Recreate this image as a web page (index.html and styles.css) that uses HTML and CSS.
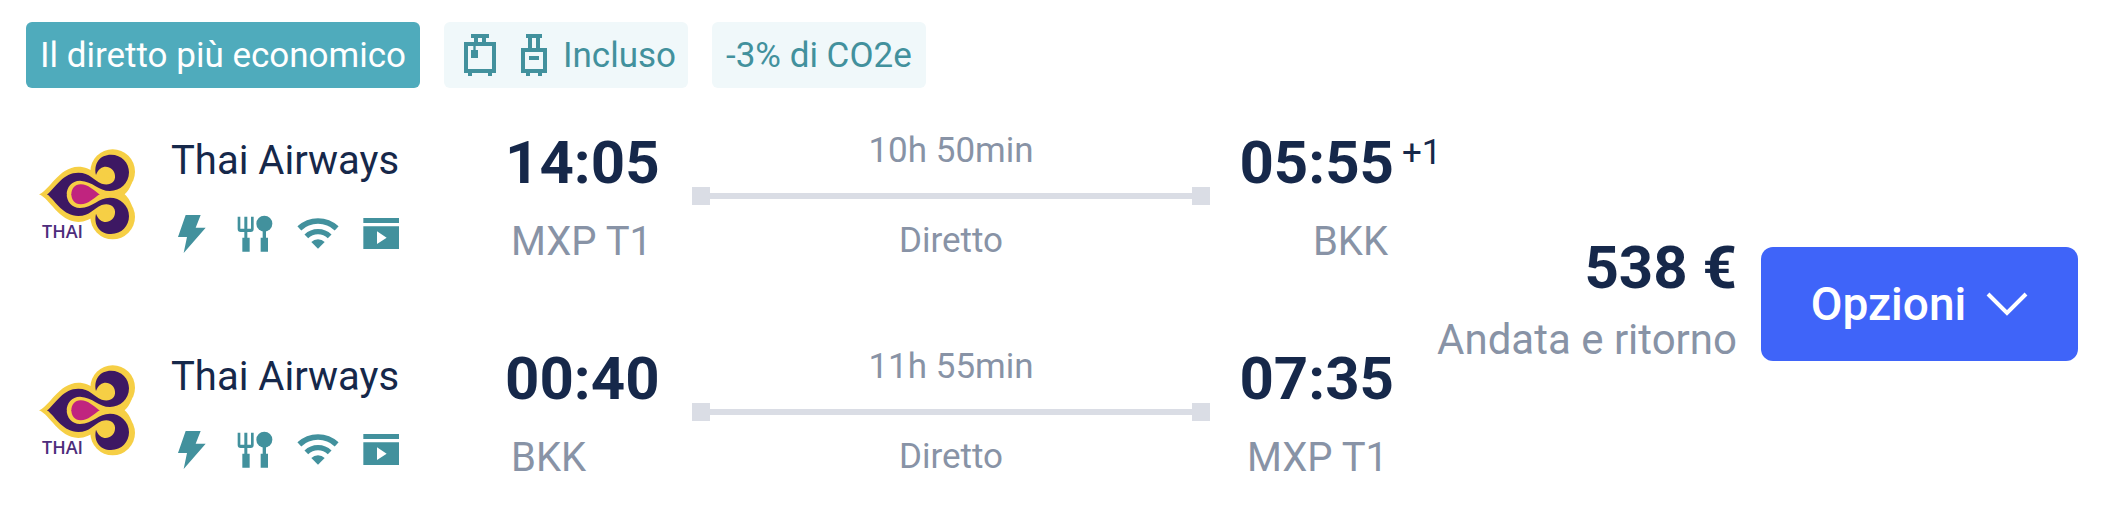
FILE: index.html
```html
<!DOCTYPE html>
<html lang="it">
<head>
  <meta charset="UTF-8">
  <meta name="viewport" content="width=device-width, initial-scale=1.0">
  <title>Volo</title>
  <link rel="stylesheet" href="styles.css">
</head>
<body>

  <svg class="sprite" aria-hidden="true">
    <symbol id="thai" viewBox="27 27 288 273">
      <g fill="#f6cf45">
        <circle cx="248" cy="95" r="67"/>
        <circle cx="248" cy="231" r="67"/>
        <path d="M27 163C60 150 85 82 145 80C165 80 180 88 200 100L260 120L305 130Q297 152 284 163Q297 174 305 196L260 206L200 226C180 238 165 246 145 246C85 244 60 176 27 163Z"/>
      </g>
      <g id="thai-half">
        <path fill="#3d1863" d="M52 163C78 140 100 98 145 98C180 98 190 120 215 131C240 139 257 125 255 107C253 78 212 66 198 105C190 70 210 44 243 44C275 44 297 68 297 97C297 130 270 153 240 153C205 153 190 124 150 122C125 122 110 142 110 164L52 164Z"/>
        <path fill="#c0247f" d="M208 163C190 150 175 133 152 133C134 133 124 147 124 164L208 164Z"/>
      </g>
      <use href="#thai-half" transform="matrix(1 0 0 -1 0 326)"/>
    </symbol>
    <symbol id="bolt" viewBox="0 0 126 126">
      <path d="M44 6H89L74 44H104L38 120L48 72H21Z"/>
    </symbol>
    <symbol id="meal" viewBox="0 0 126 126">
      <path d="M11 11H19V47H31V11H40V47H51V11H59V48Q59 57 50 57H40V74H47V116H25V74H31V57H20Q11 57 11 48Z"/>
      <path d="M86 50H96V74H102V116H80V74H86Z"/>
      <circle cx="91" cy="32" r="24"/>
    </symbol>
    <symbol id="wifi" viewBox="0 0 126 126">
      <path d="M7 46A82 82 0 0 1 119 46" fill="none" stroke="currentColor" stroke-width="17"/>
      <path d="M28 70A50 50 0 0 1 98 70" fill="none" stroke="currentColor" stroke-width="16"/>
      <path d="M43 87A29 29 0 0 1 83 87L63 107Z"/>
    </symbol>
    <symbol id="video" viewBox="0 0 126 126">
      <path d="M10 15H117V30H10Z"/>
      <path fill-rule="evenodd" d="M10 40H117V108H10ZM51 55V93L80 74Z"/>
    </symbol>
  </svg>

  <article class="flight">
    <div class="badges">
      <span class="badge badge-main">Il diretto più economico</span>
      <span class="badge badge-bags">
        <svg class="bag-cabin" viewBox="0 0 96 126" aria-hidden="true">
          <path fill-rule="evenodd" d="M0 24H96V117H0ZM12 36V105H84V36Z"/>
          <path d="M21 0H75V12H66V24H54V12H42V24H30V12H21ZM28 36H35V48H42V72H21V48H28ZM12 117H24V126H12ZM72 117H84V126H72Z"/>
        </svg>
        <svg class="bag-trolley" viewBox="0 0 78 126" aria-hidden="true">
          <path fill-rule="evenodd" d="M0 42H78V117H0ZM12 54V105H66V54Z"/>
          <path d="M15 0H63V12H57V42H45V12H33V42H21V12H15ZM24 66H54V78H24ZM15 117H27V126H15ZM51 117H63V126H51Z"/>
        </svg>
        <span>Incluso</span>
      </span>
      <span class="badge">-3% di CO2e</span>
    </div>

    <div class="content">
      <div class="legs">
        <section class="leg">
          <div class="logo">
            <svg aria-hidden="true"><use href="#thai"/></svg>
            <span class="logo-text">THAI</span>
          </div>
          <div class="airline">
            <span class="airline-name">Thai Airways</span>
            <div class="amenities">
              <svg><use href="#bolt"/></svg>
              <svg><use href="#meal"/></svg>
              <svg><use href="#wifi"/></svg>
              <svg><use href="#video"/></svg>
            </div>
          </div>
          <div class="stop">
            <time class="time">14:05</time>
            <span class="station">MXP T1</span>
          </div>
          <div class="route">
            <span>10h 50min</span>
            <div class="line"></div>
            <span>Diretto</span>
          </div>
          <div class="stop arrival">
            <time class="time">05:55<sup class="next-day">+1</sup></time>
            <span class="station">BKK</span>
          </div>
        </section>

        <section class="leg">
          <div class="logo">
            <svg aria-hidden="true"><use href="#thai"/></svg>
            <span class="logo-text">THAI</span>
          </div>
          <div class="airline">
            <span class="airline-name">Thai Airways</span>
            <div class="amenities">
              <svg><use href="#bolt"/></svg>
              <svg><use href="#meal"/></svg>
              <svg><use href="#wifi"/></svg>
              <svg><use href="#video"/></svg>
            </div>
          </div>
          <div class="stop">
            <time class="time">00:40</time>
            <span class="station">BKK</span>
          </div>
          <div class="route">
            <span>11h 55min</span>
            <div class="line"></div>
            <span>Diretto</span>
          </div>
          <div class="stop arrival">
            <time class="time">07:35</time>
            <span class="station">MXP T1</span>
          </div>
        </section>
      </div>

      <div class="price">
        <strong class="amount">538 €</strong>
        <span class="trip">Andata e ritorno</span>
      </div>

      <button class="options" type="button">
        Opzioni
        <svg viewBox="0 0 42 24" aria-hidden="true"><path d="M2 2L21 21L40 2"/></svg>
      </button>
    </div>
  </article>

</body>
</html>
```

FILE: styles.css
```css
* {
  box-sizing: border-box;
}

body {
  margin: 0;
  background: #fff;
  color: #16284a;
  font-family: Roboto, "Liberation Sans", sans-serif;
}

svg {
  display: block;
  fill: currentColor;
}

.sprite {
  position: absolute;
  width: 0;
  height: 0;
}

.flight {
  padding: 22px 28px 0 26px;
}

.badges {
  display: flex;
  gap: 24px;
}

.badge {
  display: flex;
  align-items: center;
  height: 66px;
  padding: 0 14px;
  border-radius: 6px;
  background: #f0f8fa;
  color: #42919d;
  font-size: 35px;
  white-space: nowrap;
}

.badge-main {
  background: #4fabbc;
  color: #fff;
}

.badge-bags {
  padding: 0 12px 0 20px;
}

.bag-cabin {
  width: 32px;
  height: 42px;
  margin-right: 25px;
}

.bag-trolley {
  width: 26px;
  height: 42px;
  margin-right: 16px;
}

.content {
  display: flex;
  align-items: center;
  padding-top: 12px;
}

.legs {
  flex: 1;
  display: grid;
  gap: 24px;
}

.leg {
  display: grid;
  grid-template-columns: 145px 334px 187px 1fr 184px;
  align-items: center;
  height: 192px;
}

.logo {
  position: relative;
  padding-bottom: 4px;
  margin-left: 13px;
}

.logo svg {
  width: 96px;
  height: 91px;
}

.logo-text {
  position: absolute;
  left: 3px;
  top: 72px;
  color: #4d2d7c;
  font: 600 18px/20px "Open Sans", sans-serif;
}

.airline {
  display: grid;
  gap: 28px;
}

.airline-name {
  font-size: 40px;
  line-height: 48px;
}

.amenities {
  display: flex;
  gap: 21px;
  color: #42919d;
}

.amenities svg {
  width: 42px;
  height: 42px;
}

.stop {
  display: grid;
  gap: 23px;
  padding-top: 4px;
}

.time {
  position: relative;
  font-size: 60px;
  font-weight: 700;
  line-height: 64px;
}

.station {
  padding: 0 6px;
  color: #8893a6;
  font-size: 40px;
  line-height: 48px;
}

.arrival {
  text-align: right;
}

.next-day {
  position: absolute;
  left: 100%;
  top: 0;
  margin-left: 8px;
  font-size: 35px;
  font-weight: 400;
  line-height: 44px;
}

.route {
  display: grid;
  gap: 14px;
  color: #8893a6;
  font-size: 35px;
  line-height: 44px;
  text-align: center;
}

.line {
  display: flex;
  align-items: center;
  justify-content: space-between;
  height: 18px;
  background: linear-gradient(#dadde5, #dadde5) center / 100% 6px no-repeat;
}

.line::before,
.line::after {
  content: "";
  width: 18px;
  height: 18px;
  background: #dadde5;
}

.price {
  display: grid;
  gap: 16px;
  width: 343px;
  padding-bottom: 8px;
  text-align: right;
  white-space: nowrap;
}

.amount {
  font-size: 60px;
  line-height: 64px;
}

.trip {
  color: #8893a6;
  font-size: 42px;
  line-height: 48px;
}

.options {
  display: flex;
  align-items: center;
  justify-content: center;
  gap: 20px;
  width: 317px;
  height: 114px;
  margin-left: 24px;
  border: 0;
  border-radius: 12px;
  background: #3f64f9;
  color: #fff;
  font: 500 46px Roboto, "Liberation Sans", sans-serif;
  cursor: pointer;
}

.options svg {
  width: 42px;
  height: 24px;
  fill: none;
  stroke: currentColor;
  stroke-width: 4;
}
```
